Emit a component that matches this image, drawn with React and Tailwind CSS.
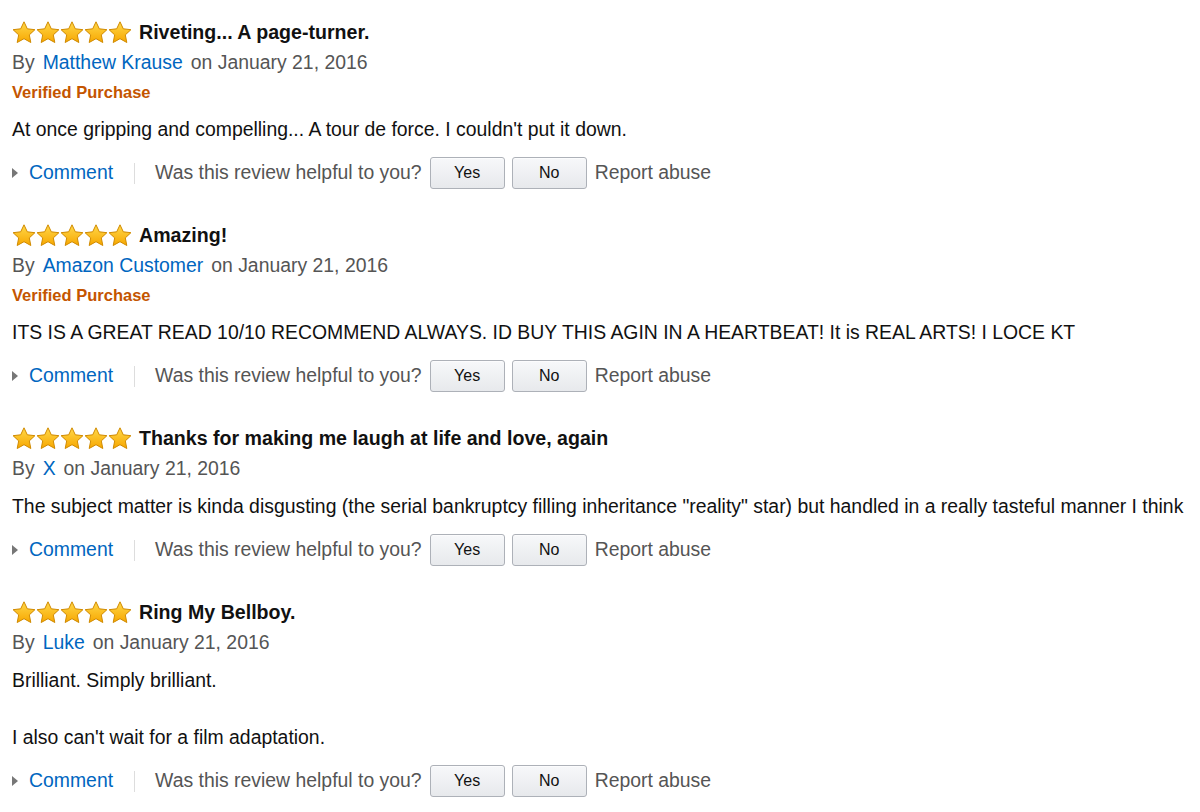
import React from "react";

const Star = () => (
  <svg width="24" height="24" viewBox="0 0 24 24" className="shrink-0">
    <defs>
      <linearGradient id="sg" x1="0" y1="0" x2="0" y2="1">
        <stop offset="0" stopColor="#ffd84a" />
        <stop offset="1" stopColor="#f7a700" />
      </linearGradient>
    </defs>
    <path
      d="M12 0.8l3.3 7 7.6 0.9-5.6 5.2 1.5 7.6L12 17.7l-6.8 3.8 1.5-7.6-5.6-5.2 7.6-.9z"
      fill="url(#sg)"
      stroke="#d08a00"
      strokeWidth="1"
      strokeLinejoin="round"
    />
  </svg>
);

const Btn = ({ children }) => (
  <button className="h-[32px] w-[75px] rounded-[3px] border border-[#adb1b8] bg-gradient-to-b from-[#f7f8fa] to-[#e7e9ec] text-[16px] text-[#111] shadow-[0_1px_0_rgba(255,255,255,0.6)_inset]">
    {children}
  </button>
);

const Review = ({ title, author, verified, body, last }) => (
  <div className={last ? "" : "mb-[32px]"}>
    <div className="flex h-[30px] items-center">
      <div className="flex">
        <Star />
        <Star />
        <Star />
        <Star />
        <Star />
      </div>
      <span className="ml-[7px] text-[19.6px] font-bold text-[#111]">{title}</span>
    </div>
    <div className="flex h-[30px] items-center text-[19.4px] text-[#555]">
      By<span className="ml-[8px] mr-[8px] text-[#0066c0]">{author}</span>on January 21, 2016
    </div>
    {verified && (
      <div className="flex h-[29px] items-center text-[16.5px] font-bold text-[#c45500]">
        Verified Purchase
      </div>
    )}
    {body.map((p, i) => (
      <div
        key={i}
        className={
          "flex h-[30px] items-center whitespace-nowrap text-[19.4px] text-[#111] " +
          (i === 0 ? "mt-[8px]" : "mt-[27px]")
        }
      >
        {p}
      </div>
    ))}
    <div className="mt-[12px] flex h-[32px] items-center text-[19.4px]">
      <svg width="6" height="10" viewBox="0 0 6 10" className="mr-[11px]">
        <path d="M0 0L6 5L0 10z" fill="#777" />
      </svg>
      <span className="text-[#0066c0]">Comment</span>
      <span className="ml-[21px] mr-[20px] h-[21px] w-px bg-[#ddd]" />
      <span className="mr-[8px] text-[#555]">Was this review helpful to you?</span>
      <Btn>Yes</Btn>
      <span className="w-[7px]" />
      <Btn>No</Btn>
      <span className="ml-[8px] text-[#555]">Report abuse</span>
    </div>
  </div>
);

export default function App() {
  return (
    <div
      className="h-[812px] w-[1200px] overflow-hidden bg-white pl-[12px] pt-[18px]"
      style={{ fontFamily: '"Liberation Sans", Arial, sans-serif' }}
    >
      <Review
        title="Riveting... A page-turner."
        author="Matthew Krause"
        verified
        body={["At once gripping and compelling... A tour de force. I couldn't put it down."]}
      />
      <Review
        title="Amazing!"
        author="Amazon Customer"
        verified
        body={["ITS IS A GREAT READ 10/10 RECOMMEND ALWAYS. ID BUY THIS AGIN IN A HEARTBEAT! It is REAL ARTS! I LOCE KT"]}
      />
      <Review
        title="Thanks for making me laugh at life and love, again"
        author="X"
        body={[
          'The subject matter is kinda disgusting (the serial bankruptcy filling inheritance "reality" star) but handled in a really tasteful manner I think',
        ]}
      />
      <Review
        title="Ring My Bellboy."
        author="Luke"
        body={["Brilliant. Simply brilliant.", "I also can't wait for a film adaptation."]}
        last
      />
    </div>
  );
}
